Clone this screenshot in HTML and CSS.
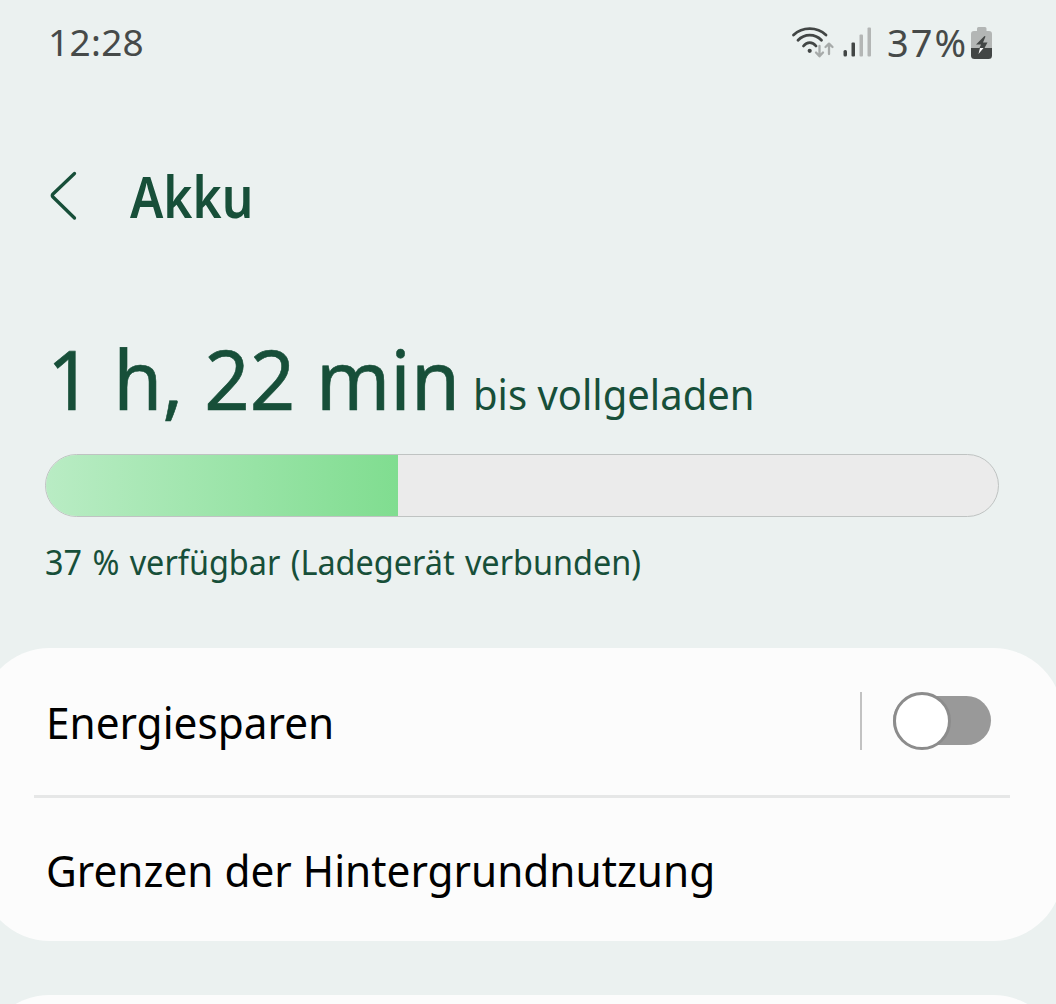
FILE: index.html
```html
<!DOCTYPE html>
<html lang="de">
<head>
<meta charset="utf-8">
<title>Akku</title>
<link rel="stylesheet" href="styles.css">
</head>
<body>
<header class="status">
  <span class="clock">12:28</span>
  <div class="indicators">
    <svg class="wifi" width="44" height="34" viewBox="0 0 44 34" fill="none" stroke-linecap="round">
      <g stroke="#424645" stroke-width="2.8">
        <path d="M2.500 10C11.500 1.500 26 1.500 35 10"/>
        <path d="M7 15.300C13.500 8.500 24 8.500 30.500 15.300"/>
        <path d="M12.500 21C16 16.500 21.500 16.500 25 21"/>
      </g>
      <circle cx="18.700" cy="25.800" r="2.100" fill="#424645"/>
      <g stroke="#a7abaa" stroke-width="2.300" stroke-linejoin="round">
        <path d="M28.500 21V31M25 27.500L28.500 31.300L32 27.500"/>
        <path d="M38 29V19M34.500 22L38 18.600L41.500 22"/>
      </g>
    </svg>
    <svg class="signal" width="30" height="32" viewBox="0 0 30 32">
      <rect x="0.500" y="23" width="3.500" height="6.500" rx="1.500" fill="#424645"/>
      <rect x="8.500" y="15.500" width="3.500" height="14" rx="1" fill="#424645"/>
      <rect x="16.500" y="7.500" width="3.500" height="22" rx="1" fill="#b3b6b5"/>
      <rect x="24.500" y="0.500" width="3.500" height="29" rx="1" fill="#b3b6b5"/>
    </svg>
    <span class="percent">37%</span>
    <svg class="battery" width="22" height="34" viewBox="0 0 22 34">
      <path d="M6 5V2.500Q6 1 7.500 1H14Q15.500 1 15.500 2.500V5H18Q21 5 21 8V23H0V8Q0 5 3 5Z" fill="#b3b6b5"/>
      <path d="M0 22H21V29.500Q21 33 17.500 33H3.500Q0 33 0 29.500Z" fill="#424645"/>
      <path d="M13.500 10L5 18.500H10L8.500 22H13.500L16.500 16.500H12L14.500 10.500Z" fill="#424645"/>
      <path d="M9 22H12.500L7.500 28Z" fill="#fff"/>
    </svg>
  </div>
</header>
<div class="titlebar">
  <svg class="back" width="30" height="52" viewBox="0 0 30 52" fill="none" stroke="#174f39" stroke-width="3.300" stroke-linecap="round" stroke-linejoin="round">
    <path d="M25.500 3.500L4 24Q2.500 25.500 4 27L25.500 48"/>
  </svg>
  <h1 class="title">Akku</h1>
</div>
<section class="charge">
  <p class="remaining"><span class="time">1 h, 22 min</span><span class="until">bis vollgeladen</span></p>
  <div class="meter"><div class="level" style="width:37%"></div></div>
  <p class="available">37 % verfügbar (Ladegerät verbunden)</p>
</section>
<main class="cards">
  <section class="card">
    <div class="row row-switch">
      <span class="label">Energiesparen</span>
      <div class="control"><span class="rule"></span><span class="switch"><span class="knob"></span></span></div>
    </div>
    <div class="row"><span class="label">Grenzen der Hintergrundnutzung</span></div>
  </section>
  <div class="peek"><section class="card"></section></div>
</main>
</body>
</html>
```
FILE: styles.css
```css
* { box-sizing: border-box; }

body {
  margin: 0;
  height: 1004px;
  overflow: hidden;
  display: flex;
  flex-direction: column;
  background: #ebf1f0;
  color: #174f39;
  font-family: "Noto Sans", "Open Sans", sans-serif;
}

h1, p { margin: 0; }

.status {
  height: 86px;
  flex: none;
  display: flex;
  align-items: center;
  justify-content: space-between;
  padding: 0 63px 0 48px;
  color: #464a49;
}

.clock { font-size: 37px; line-height: 50px; padding-bottom: 2px; letter-spacing: 0.3px; }
.indicators { display: flex; align-items: center; }
.wifi { margin-top: -3px; }
.signal { margin-left: 8px; }
.percent { margin-left: 14px; padding-bottom: 2px; font-size: 38px; line-height: 50px; letter-spacing: 2px; }
.battery { margin-left: 5px; }

.percent + .battery { margin-left: 3px; }

.titlebar {
  height: 220px;
  flex: none;
  display: flex;
  align-items: center;
  gap: 51px;
  padding-left: 49px;
}

/* Slightly condensed letterforms for all headings and labels */
.title, .time, .until, .available, .label { transform-origin: left center; }

.title { font-size: 57px; line-height: 78px; font-weight: 600; transform: scaleX(0.87); }

.charge { height: 342px; flex: none; padding: 16px 57px 0 45px; }

.remaining {
  height: 132px;
  display: flex;
  align-items: baseline;
  white-space: nowrap;
}

.time {
  width: 417px;
  margin-left: 2px;
  font-size: 82px;
  line-height: 112px;
  -webkit-text-stroke: 0.6px currentColor;
  transform: scaleX(0.97);
}

.until { margin-left: 9px; font-size: 41px; transform: scaleX(0.976); }

.meter {
  width: 954px;
  height: 63px;
  overflow: hidden;
  border: 1px solid #bfc3c2;
  border-radius: 32px;
  background: #ebebeb;
}

.level { height: 100%; background: linear-gradient(90deg, #b9ecc4, #80dd90); }

.available {
  margin-top: 22px;
  font-size: 34px;
  line-height: 46px;
  word-spacing: 2px;
  white-space: nowrap;
  transform: scaleX(0.953);
}

.cards {
  margin: 0 -7px 0 -20px;
  flex: 1;
  display: flex;
  flex-direction: column;
  gap: 54px;
}

.card {
  height: 293px;
  flex: none;
  padding: 0 53px 0 54px;
  border-radius: 70px;
  background: #fcfcfc;
  color: #000;
}

.peek { flex: 1; min-height: 0; overflow: hidden; }

.row {
  height: 144px;
  display: flex;
  align-items: center;
  justify-content: space-between;
  padding: 0 12px;
}

.row-switch { height: 150px; border-bottom: 3px solid #e6e7e7; }
.label { font-size: 44px; line-height: 60px; white-space: nowrap; transform: scaleX(0.962); }
.control { display: flex; align-items: center; gap: 31px; margin: 0 7px 2px 0; }
.rule { width: 2px; height: 58px; background: #c2c2c2; }

.switch {
  width: 98px;
  height: 49px;
  display: flex;
  align-items: center;
  border-radius: 25px;
  background: #999;
}

.knob { width: 58px; height: 58px; flex: none; border: 3px solid #8c8c8c; border-radius: 50%; background: #fff; }
```
